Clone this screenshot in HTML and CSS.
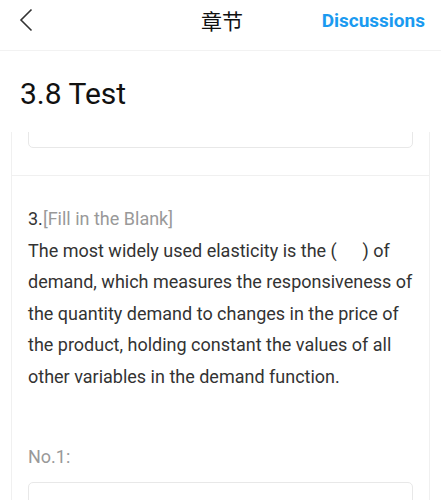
FILE: index.html
```html
<!DOCTYPE html>
<html>
<head>
    <title>3.8 Test | 章节</title>
    <meta charset="utf-8">
    <link rel="stylesheet" href="styles.css">
</head>
<body>
    <div class="header">
        <div class="back">
            <svg width="14" height="24" viewBox="0 0 14 24"><path d="M12.5 1.5 L2 12 L12.5 22.5" fill="none" stroke="#333" stroke-width="1.6"/></svg>
        </div>
        <div class="header-title">章节</div>
        <div class="header-link">Discussions</div>
    </div>

    <h1 class="page-title">3.8 Test</h1>

    <div class="scroll">
        <div class="card">
            <div class="answer-box prev"></div>

            <div class="question">
                <div class="q-type">3.<span class="q-kind">[Fill in the Blank]</span></div>
                <div class="q-text">The most widely used elasticity is the (&emsp;&thinsp;&thinsp;) of demand, which measures the responsiveness of the quantity demand to changes in the price of the product, holding constant the values of all other variables in the demand function.</div>
                <div class="blank-label">No.1:</div>
                <div class="answer-box"></div>
            </div>
        </div>
    </div>
</body>
</html>
```

FILE: styles.css
```css
body { margin: 0; font-family: Roboto, "Noto Sans CJK SC", sans-serif; background: #fff; color: #333; }

.header {
    height: 40px;
    display: grid;
    grid-template-columns: 1fr auto 1fr;
    align-items: center;
    padding: 0 16px 10px 19px;
    border-bottom: 1px solid #f2f2f2;
}
.back { display: flex; align-items: center; }
.header-title { font-size: 21px; color: #111; }
.header-link { justify-self: end; font-size: 19px; font-weight: bold; color: #1a9af0; }

.page-title { margin: 0; padding: 25px 20px 20px; font-size: 30px; line-height: 36px; font-weight: normal; color: #111; }

.scroll { height: 368px; overflow: hidden; padding: 0 11px; }
.card { display: flow-root; border-left: 1px solid #f0f0f0; border-right: 1px solid #f0f0f0; height: 100%; }

.answer-box {
    margin: 0 16px;
    height: 44px;
    border: 1px solid #e8e8e8;
    border-radius: 5px;
}
.answer-box.prev { margin-top: -30px; }

.question { margin-top: 27px; border-top: 1px solid #f0f0f0; padding: 27px 0 0; }
.question .answer-box { margin-top: 9px; }

.q-type, .q-text, .blank-label { padding: 0 16px; font-size: 18px; line-height: 31.5px; }
.q-type { color: #333; }
.q-kind { color: #999; }
.q-text { color: #333; }
.blank-label { margin-top: 49px; color: #999; }
```
